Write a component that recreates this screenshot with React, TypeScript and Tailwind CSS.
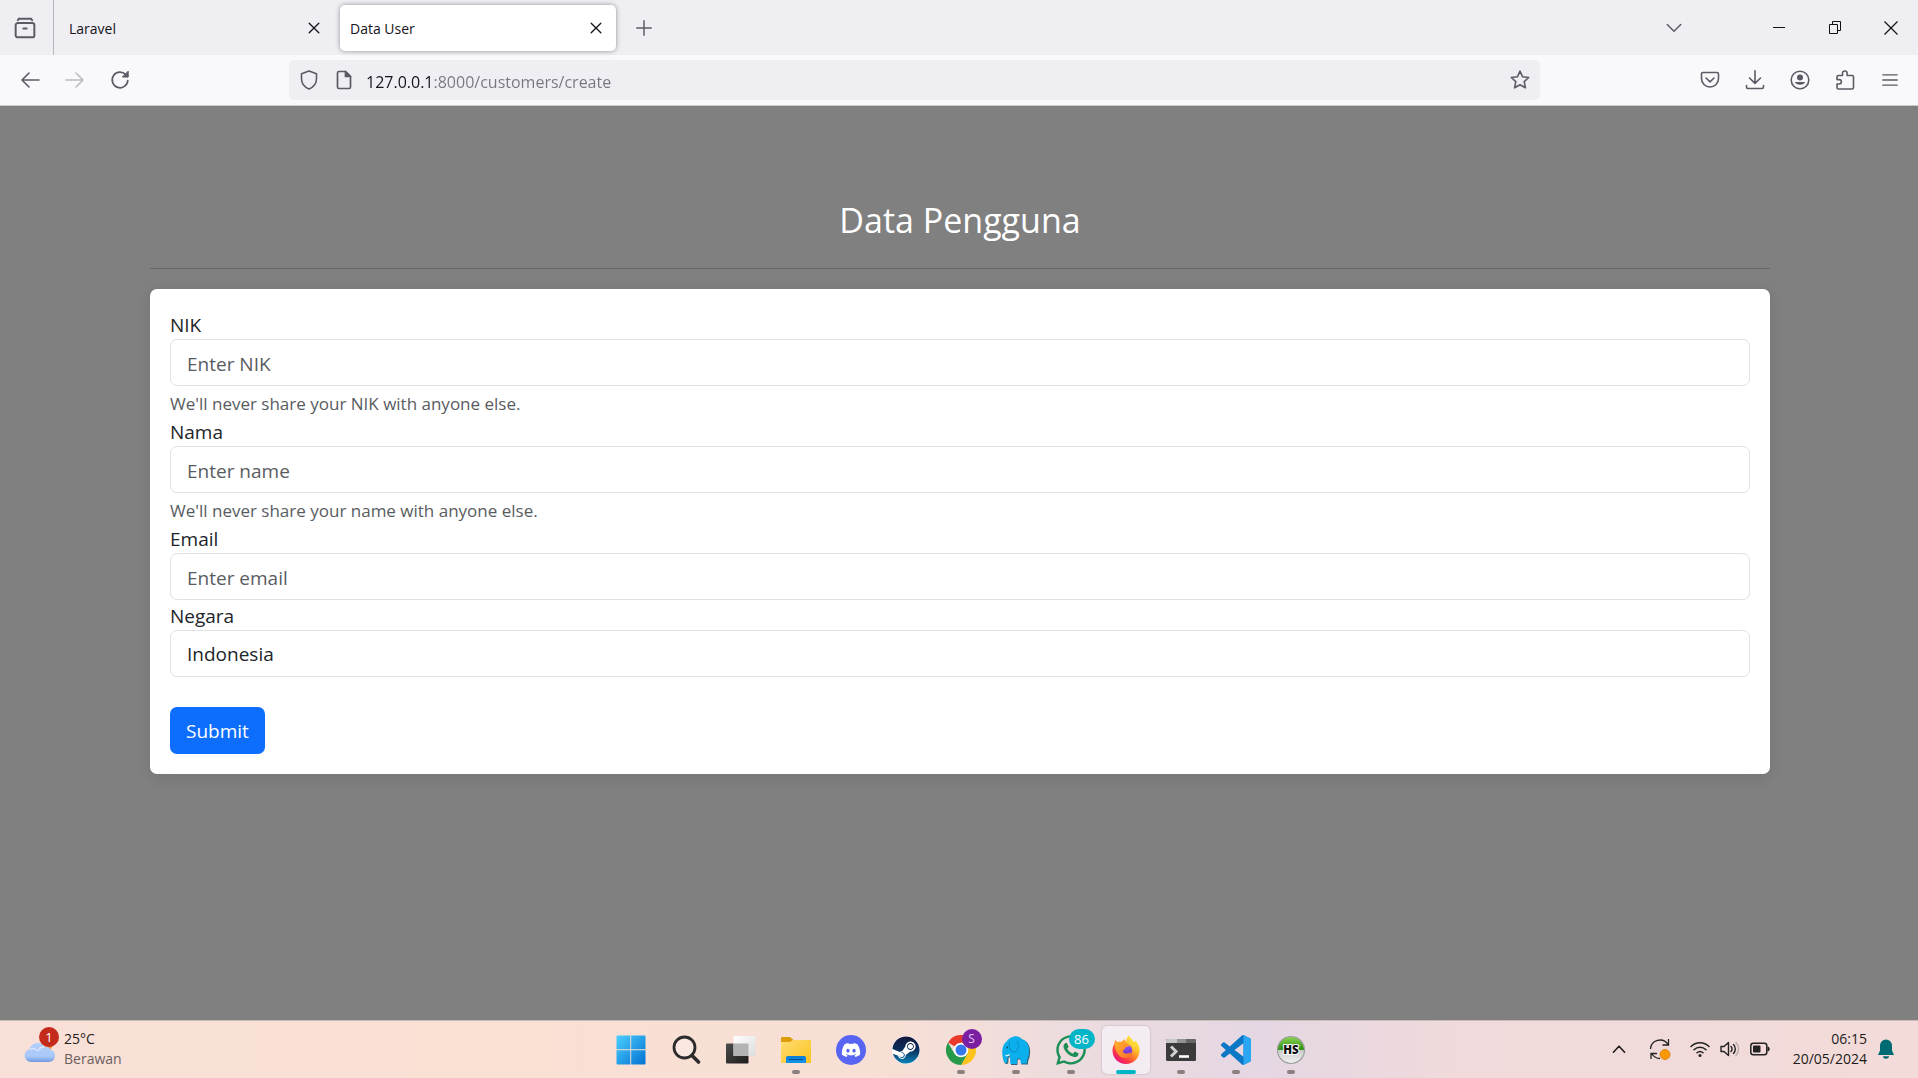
import React from "react";
import { FaDiscord, FaSteam, FaWhatsapp } from "react-icons/fa";

type Kids = { children: React.ReactNode };

function Line({ size = 20, w = 1.6, children }: Kids & { size?: number; w?: number }) {
  return (
    <svg width={size} height={size} viewBox="0 0 20 20" fill="none" stroke="currentColor" strokeWidth={w} strokeLinecap="round" strokeLinejoin="round">
      {children}
    </svg>
  );
}

function ToolButton({ label, dim, children }: Kids & { label: string; dim?: boolean }) {
  return (
    <button type="button" aria-label={label} className={dim ? "flex h-10 w-[45px] items-center justify-center text-[#bcbcc1]" : "flex h-10 w-[45px] items-center justify-center text-[#5b5b66]"}>
      {children}
    </button>
  );
}

function CloseX() {
  return (
    <Line size={12} w={2.2}>
      <path d="M2 2l16 16M18 2L2 18" />
    </Line>
  );
}

function TabStrip() {
  return (
    <div className="flex h-[55px] items-center bg-[#efeef3] text-[14px] text-[#15141a]">
      <button type="button" aria-label="Recent browsing" className="flex h-full w-[54px] items-center justify-center border-r border-[#b8b8be] pr-1 text-[#5b5b66]">
        <Line size={22} w={1.8}>
          <path d="M4.5 1.5h11l1 1.5M3.5 3l1-1.500" />
          <rect x="1.500" y="5.500" width="17" height="13" rx="2" />
          <path d="M8.500 10.500h3" />
        </Line>
      </button>
      <div className="flex w-[286px] items-center justify-between pl-[15px] pr-5">
        <span className="pt-[2px]">Laravel</span>
        <button type="button" aria-label="Close Laravel tab"><CloseX /></button>
      </div>
      <div className="flex h-[46px] w-[276px] items-center justify-between rounded-[5px] bg-white pl-[10px] pr-[14px] shadow-[0_0_5px_rgba(0,0,0,0.4)]">
        <span className="pt-[2px]">Data User</span>
        <button type="button" aria-label="Close Data User tab"><CloseX /></button>
      </div>
      <button type="button" aria-label="New tab" className="flex w-[55px] justify-center text-[#5b5b66]">
        <Line size={18} w={1.6}><path d="M10 2v16M2 10h16" /></Line>
      </button>
      <div className="flex-1" />
      <button type="button" aria-label="List all tabs" className="mr-[54px] flex h-full w-[45px] items-center justify-center text-[#5b5b66]">
        <Line size={18}><path d="M2.500 6l7.500 7.500L17.500 6" /></Line>
      </button>
      <button type="button" aria-label="Minimize" className="flex h-full w-[57px] items-center justify-center">
        <svg width="12" height="12" viewBox="0 0 12 12"><rect y="5" width="12" height="1" fill="#111" /></svg>
      </button>
      <button type="button" aria-label="Restore" className="flex h-full w-[57px] items-center justify-center">
        <svg width="13" height="13" viewBox="0 0 13 13" fill="none" stroke="#111"><path d="M.5 3.500h8v9h-8zM3.500 3.500v-3h8v9h-3" /></svg>
      </button>
      <button type="button" aria-label="Close window" className="flex h-full w-[54px] items-center justify-center">
        <svg width="14" height="14" viewBox="0 0 14 14" stroke="#111" strokeWidth="1.200"><path d="M.5.5l13 13M13.500.5l-13 13" /></svg>
      </button>
    </div>
  );
}

function NavBar() {
  return (
    <div className="flex h-[51px] items-center border-b border-[#c9c9ce] bg-[#f9f9fb] pl-[7px] pr-[6px]">
      <ToolButton label="Back"><Line size={20}><path d="M19 10H2M9 3L2 10l7 7" /></Line></ToolButton>
      <ToolButton label="Forward" dim><Line size={20}><path d="M1 10h17M11 3l7 7-7 7" /></Line></ToolButton>
      <ToolButton label="Reload">
        <Line size={20} w={1.7}>
          <path d="M17.800 10.500a7.800 7.800 0 1 1-2.300-6.100l2 2" />
          <path d="M18.200 1.500v5.500h-5.500z" fill="currentColor" strokeWidth="1" />
        </Line>
      </ToolButton>
      <div className="w-[147px]" />
      <div className="flex h-10 flex-1 items-center rounded-[5px] bg-[#efeef3] px-[10px] text-[#5b5b66]">
        <Line size={20}><path d="M10 1l7.500 2.800v5C17.500 13.500 14.500 17.200 10 19 5.500 17.200 2.500 13.500 2.500 8.800v-5z" /></Line>
        <span className="ml-[15px] flex">
          <Line size={20} w={1.7}>
            <path d="M5 1.500h6.500l5 5V17a1.500 1.500 0 0 1-1.500 1.500H5A1.500 1.500 0 0 1 3.500 17V3A1.500 1.500 0 0 1 5 1.500z" />
            <path d="M11.500 1.500v5h5z" fill="currentColor" />
          </Line>
        </span>
        <input
          aria-label="Address"
          defaultValue="127.0.0.1:8000/customers/create"
          className="ml-3 mt-[3px] flex-1 bg-[linear-gradient(90deg,#15141a_66px,#77777f_66px)] bg-clip-text text-[16px] leading-6 text-transparent outline-none"
        />
        <button type="button" aria-label="Bookmark this page">
          <Line size={20}><path d="M10 1.200l2.600 5.600 6.100.7-4.500 4.200 1.200 6.100-5.400-3-5.400 3 1.200-6.100L1.300 7.500l6.100-.7z" /></Line>
        </button>
      </div>
      <div className="w-[147px]" />
      <ToolButton label="Save to Pocket"><Line size={20}><path d="M3 2.500h14A1.500 1.500 0 0 1 18.500 4v4.500a8.500 8.500 0 0 1-17 0V4A1.500 1.500 0 0 1 3 2.500zM6 8l4 3.800L14 8" /></Line></ToolButton>
      <ToolButton label="Downloads"><Line size={20}><path d="M10 .8v12.400M4.500 8l5.500 5.400L15.500 8M1.500 15.500V17A1.500 1.500 0 0 0 3 18.500h14a1.500 1.500 0 0 0 1.500-1.500v-1.500" /></Line></ToolButton>
      <ToolButton label="Account">
        <Line size={20}>
          <circle cx="10" cy="10" r="8.800" />
          <circle cx="10" cy="7.500" r="3" fill="currentColor" stroke="none" />
          <path d="M4.800 12h10.400a5.600 4.200 0 0 1-10.400 0z" fill="currentColor" stroke="none" />
        </Line>
      </ToolButton>
      <ToolButton label="Extensions"><Line size={20}><path d="M7.500 5.500V3.300a2.300 2.300 0 0 1 4.600 0v2.200h5.100A1.300 1.300 0 0 1 18.500 7v10.500a1.500 1.500 0 0 1-1.500 1.500H3.500A1.500 1.500 0 0 1 2 17.500V14h2.200a2.200 2.200 0 0 0 0-4.400H2V7a1.500 1.500 0 0 1 1.500-1.500z" /></Line></ToolButton>
      <ToolButton label="Menu"><Line size={18}><path d="M2 4.300h16M2 10h16M2 15.700h16" /></Line></ToolButton>
    </div>
  );
}

const control = "block h-[47px] w-full appearance-none rounded-[7px] border border-[#dee2e6] bg-white px-4 pt-[2px] text-[19px] text-[#212529] outline-none placeholder:text-[#595c5f]";

function Field({ id, label, hint, children }: Kids & { id: string; label: string; hint?: string }) {
  return (
    <div>
      <label htmlFor={id} className="block pt-[2px] text-[19px] leading-[28px] text-[#212529]">{label}</label>
      {children}
      {hint && <small className="block pt-[6px] text-[17px] leading-6 text-[#595c5f]">{hint}</small>}
    </div>
  );
}

function Page() {
  return (
    <main className="flex-1 bg-[#808080] pl-[34px] pr-8">
      <div className="mx-auto max-w-[1620px] pt-[93px]">
        <h1 className="text-center text-[34px] leading-[42px] text-white">Data Pengguna</h1>
        <hr className="mb-5 mt-[27px] border-[#666768]" />
        <form className="rounded-[7px] bg-white p-5 shadow-[0_3px_16px_rgba(0,0,0,0.1)]" onSubmit={(e) => e.preventDefault()}>
          <Field id="nik" label="NIK" hint="We'll never share your NIK with anyone else.">
            <input id="nik" type="text" placeholder="Enter NIK" className={control} />
          </Field>
          <Field id="nama" label="Nama" hint="We'll never share your name with anyone else.">
            <input id="nama" type="text" placeholder="Enter name" className={control} />
          </Field>
          <Field id="email" label="Email">
            <input id="email" type="email" placeholder="Enter email" className={control} />
          </Field>
          <Field id="negara" label="Negara">
            <select id="negara" className={control}><option>Indonesia</option></select>
          </Field>
          <button type="submit" className="mt-[30px] h-[47px] rounded-[7px] bg-[#0d6efd] px-4 pt-[2px] text-[19px] text-white">Submit</button>
        </form>
      </div>
    </main>
  );
}

function TaskItem({ label, running, active, children }: Kids & { label: string; running?: boolean; active?: boolean }) {
  return (
    <button type="button" aria-label={label} className="flex h-[58px] w-[55px] items-center justify-center">
      <span className={active ? "relative flex h-12 w-12 items-center justify-center rounded-[5px] bg-[#f3edf3] shadow-[0_0_2px_rgba(0,0,0,0.25)]" : "relative flex h-12 w-12 items-center justify-center"}>
        {children}
        {running && <span className={active ? "absolute bottom-0 h-1 w-5 rounded-full bg-[#04b5c8]" : "absolute bottom-0 h-1 w-2 rounded-full bg-[#8b7f80]"} />}
      </span>
    </button>
  );
}

function WindowsLogo() {
  return (
    <svg width="30" height="30" viewBox="0 0 30 30">
      <defs>
        <linearGradient id="win" gradientUnits="userSpaceOnUse" x1="0" y1="0" x2="30" y2="30"><stop stopColor="#4dd0ff" /><stop offset="1" stopColor="#0070d0" /></linearGradient>
      </defs>
      <path fill="url(#win)" d="M1.500.5h12.800v13.800H.5V1.500a1 1 0 0 1 1-1zM15.200.5h13.300a1 1 0 0 1 1 1v12.800H15.200zM.5 15.200h13.800v14.300H1.500a1 1 0 0 1-1-1zM15.200 15.200h14.300v13.300a1 1 0 0 1-1 1H15.200z" />
    </svg>
  );
}

function SearchLogo() {
  return (
    <svg width="30" height="30" viewBox="0 0 30 30" fill="none" stroke="#2d2c2c">
      <circle cx="13.500" cy="12.500" r="10.500" strokeWidth="2.800" fill="#fff" fillOpacity=".3" />
      <path d="M21 20.500l6.500 6.500" strokeWidth="3.600" strokeLinecap="round" />
    </svg>
  );
}

function TaskViewLogo() {
  return (
    <svg width="30" height="30" viewBox="0 0 30 30">
      <defs>
        <linearGradient id="tvd" x2="1" y2="1"><stop stopColor="#4b4b49" /><stop offset="1" stopColor="#1d1d1d" /></linearGradient>
        <linearGradient id="tvl" x2="1" y2="1"><stop stopColor="#fff" /><stop offset="1" stopColor="#dcdcdc" /></linearGradient>
      </defs>
      <rect x="0" y="8.500" width="22.500" height="20" rx="1" fill="url(#tvd)" />
      <rect x="7.500" y="1" width="22" height="20" rx="1" fill="url(#tvl)" />
      <path d="M7.500 8.500h15V21h-15z" fill="#b3b3b3" />
    </svg>
  );
}

function FolderLogo() {
  return (
    <svg width="30" height="30" viewBox="0 0 30 30">
      <defs>
        <linearGradient id="fold" x2="1" y2="1"><stop stopColor="#ffdd74" /><stop offset="1" stopColor="#fcc21c" /></linearGradient>
        <linearGradient id="fblue" x2="0" y2="1"><stop stopColor="#0b7bd6" /><stop offset="1" stopColor="#1296ea" /></linearGradient>
      </defs>
      <path d="M0 3a1 1 0 0 1 1-1h8l3.500 3H29a1 1 0 0 1 1 1v4H0z" fill="#dd9c0c" />
      <path d="M0 7h9l3-2h17a1 1 0 0 1 1 1v21a1 1 0 0 1-1 1H1a1 1 0 0 1-1-1z" fill="url(#fold)" />
      <path d="M5 28v-5a2 2 0 0 1 2-2h16a2 2 0 0 1 2 2v5z" fill="url(#fblue)" />
      <path d="M8.500 24.500h13" stroke="#07508f" strokeWidth="1.200" strokeLinecap="round" />
    </svg>
  );
}

function ChromeLogo() {
  return (
    <svg width="30" height="30" viewBox="0 0 30 30">
      <path d="M15 15L2 7.500A15 15 0 0 1 28 7.500z" fill="#e8392b" />
      <path d="M15 15V7.500h13A15 15 0 0 1 15 30l6.500-11.200z" fill="#fcc31e" />
      <path d="M15 15l6.500 3.800L15 30A15 15 0 0 1 2 7.500l6.500 11.200z" fill="#27994a" />
      <circle cx="15" cy="15" r="7.300" fill="#fff" />
      <circle cx="15" cy="15" r="5.500" fill="#3478ef" />
    </svg>
  );
}

function ElephantLogo() {
  return (
    <svg width="30" height="30" viewBox="0 0 30 30">
      <path d="M2 24C.5 17 1 10 5.500 6.500 8 3 12.500.5 16 1.500c2.500.2 3.500 1.500 4.500 2.500C26 5.500 29 11 28.500 17c-.2 4-.8 6-1.800 8l-.5 4h-6.500l-.5-5h-3l-.4 5.500H9.500L8.800 21c-1.300.8-2 1.500-2 3.500 0 3 .2 4-1.800 4-1.600 0-2.300-1.500-3-4.500z" fill="#35627a" transform="translate(.6 .5)" />
      <path d="M2 23.500C.5 17 1 10 5.500 6.500 8 3 12.500.5 16 1.500c2.500.2 3.500 1.500 4.500 2.500 5.500 1.500 8 7 7.500 12.500-.2 4-.8 6-1.800 8l-.5 4h-6l-.5-5h-3l-.4 5.500H9.500L8.800 20.500c-1.300.8-2.500 1.500-2.500 4 0 2.500.2 3.500-1.500 3.500-1.400 0-2.100-1.500-2.800-4.500z" fill="#0bafec" />
      <path d="M8.500 7c-1 5 1 10 4.500 10 4 0 6-6 3-11" fill="none" stroke="#078cc4" strokeWidth="1" />
      <path d="M4.500 20.500c1.500.4 3 .2 4-1" fill="none" stroke="#e5f8ff" strokeWidth="1.300" />
      <circle cx="6.200" cy="12.500" r=".9" fill="#0b5274" />
    </svg>
  );
}

function FirefoxLogo() {
  return (
    <svg width="30" height="30" viewBox="0 0 30 30">
      <defs>
        <linearGradient id="ffa" x1=".85" y1=".1" x2=".2" y2=".95"><stop stopColor="#fff04a" /><stop offset=".3" stopColor="#ffc02c" /><stop offset=".55" stopColor="#ff7a2a" /><stop offset=".8" stopColor="#fb2f4e" /><stop offset="1" stopColor="#e31587" /></linearGradient>
        <linearGradient id="ffb" x2="0" y2="1"><stop stopColor="#9059ff" /><stop offset="1" stopColor="#6b2bbd" /></linearGradient>
        <linearGradient id="ffc" x2="1" y2="1"><stop stopColor="#ffb52b" /><stop offset="1" stopColor="#ff6f2c" /></linearGradient>
      </defs>
      <path d="M17.500.5c2 1.500 3.200 3 4 5 .8.400 1.500 1 2.200 1.800l.3-2c3.500 3 4.800 7 4.600 10.700C28.200 23.600 22.300 29 15 29 7.500 29 1.500 23.500 1.500 15.500c0-3 1-5.500 2.200-7.200L4 5l2.500 2.200c1-.4 2.500-.5 3.500-.2L14 4c0 1.500 0 2.500 1 3 .2-2.500 1-4.800 2.500-6.500z" fill="url(#ffa)" />
      <circle cx="15.200" cy="15.500" r="6" fill="url(#ffb)" />
      <path d="M3.500 7.500c2 0 4.500-.8 6.500-.3L14 4.500c-.2 2 .4 3 2.500 4.500l2 2c-1 .8-2.500.5-3.500 1.200-1 .6-1 2-2.200 2.800-1.300.8-1.300 2 .2 2.900 2.800 1.600 5 0 7-.4 2 1.500-1.500 5.500-6 5.500-6 0-10-6-10.500-15.500z" fill="url(#ffc)" />
      <path d="M18 8.500c3 1 5 4 4.500 7.500 1.500-2 1.500-5 .5-7L19 6z" fill="#ffd735" />
    </svg>
  );
}

function TerminalLogo() {
  return (
    <svg width="30" height="30" viewBox="0 0 30 30">
      <rect y="4" width="30" height="22" rx="1.500" fill="#3b3b3b" />
      <path d="M1.500 4H11v4H0V5.500A1.500 1.500 0 0 1 1.500 4z" fill="#c7c7c7" />
      <path d="M11 4h9v4h-9z" fill="#939393" />
      <path d="M20 4h8.500A1.500 1.500 0 0 1 30 5.500V8H20z" fill="#686868" />
      <path d="M5 11.500l5 5-5 5" fill="none" stroke="#d0d0d0" strokeWidth="3" />
      <path d="M13 21.500h10" stroke="#fff" strokeWidth="2.600" />
    </svg>
  );
}

function VsCodeLogo() {
  return (
    <svg width="30" height="30" viewBox="0 0 24 24">
      <path fill="#0a78c4" d="M23.150 2.587L18.210.21a1.494 1.494 0 0 0-1.705.29l-9.460 8.630-4.120-3.128a.999.999 0 0 0-1.276.057L.327 7.261A1 1 0 0 0 .326 8.740L3.899 12 .326 15.260a1 1 0 0 0 .001 1.479L1.650 17.940a.999.999 0 0 0 1.276.057l4.120-3.128 9.460 8.630a1.492 1.492 0 0 0 1.704.290l4.942-2.377A1.500 1.500 0 0 0 24 20.060V3.939a1.500 1.500 0 0 0-.850-1.352zm-5.146 14.861L10.826 12l7.178-5.448v10.896z" />
      <path fill="#2aa6f2" d="M18.210.21l4.940 2.377A1.500 1.500 0 0 1 24 3.940v16.120a1.500 1.500 0 0 1-.850 1.350l-4.940 2.380c-.6.300-1.200.100-1.705-.290.8.6 1.500.1 1.500-.900V1.400c0-1-.7-1.500-1.500-.9.500-.5 1.100-.6 1.705-.29z" />
    </svg>
  );
}

function HeidiLogo() {
  return (
    <svg width="30" height="30" viewBox="0 0 30 30">
      <defs>
        <linearGradient id="hs" x2="0" y2="1"><stop stopColor="#8fd65a" /><stop offset=".48" stopColor="#2c8f12" /><stop offset=".5" stopColor="#c9cbc9" /><stop offset="1" stopColor="#f2f2f2" /></linearGradient>
      </defs>
      <circle cx="15" cy="15" r="13.500" fill="url(#hs)" stroke="#9b9f9b" strokeWidth="1.200" />
      <text x="15" y="19" textAnchor="middle" fontFamily="Open Sans" fontWeight="800" fontSize="11.500" fill="#111" stroke="#fff" strokeWidth="2" paintOrder="stroke">HS</text>
    </svg>
  );
}

function Taskbar() {
  return (
    <footer className="grid h-[58px] grid-cols-[1fr_auto_1fr] items-center border-t border-[#c9bcb8] bg-[linear-gradient(90deg,#f8e0d8_0%,#fae0d3_25%,#f7dfd6_47%,#eadbe0_58%,#e5d7e3_66%,#f0dadb_76%,#f2dbd8_100%)] pl-[3px] leading-5 text-[#1f1b1b]">
      <div className="flex items-center pb-[2px] pl-5 text-[14px]">
        <span className="relative flex h-11 w-[41px]">
          <svg width="32" height="40" viewBox="0 0 32 40">
            <defs><linearGradient id="cloud" x2="0" y2="1"><stop stopColor="#b5cffb" /><stop offset=".7" stopColor="#a9c8f8" /><stop offset="1" stopColor="#6f9be2" /></linearGradient></defs>
            <circle cx="24" cy="17" r="6" fill="#f08a24" />
            <path d="M8 35a6.500 6.500 0 0 1-1.500-12.800A8.500 8.500 0 0 1 22 20c2.500-1 5 .5 6 3a6.200 6.200 0 0 1-2 12z" fill="url(#cloud)" />
            <path d="M7 22.500c3-1.500 6-.5 7.500 1.500M15 24c1.500-3 4-4.500 7-4" fill="none" stroke="#dfeafe" strokeWidth="1.200" />
          </svg>
          <span className="absolute left-4 top-0 flex h-5 w-5 items-center justify-center rounded-full bg-[#c42b1c] text-[13px] text-white">1</span>
        </span>
        <span className="flex flex-col">
          <span>25°C</span>
          <span className="text-[#6a605e]">Berawan</span>
        </span>
      </div>
      <nav aria-label="Taskbar apps" className="flex">
        <TaskItem label="Start"><WindowsLogo /></TaskItem>
        <TaskItem label="Search"><SearchLogo /></TaskItem>
        <TaskItem label="Task view"><TaskViewLogo /></TaskItem>
        <TaskItem label="File Explorer" running><FolderLogo /></TaskItem>
        <TaskItem label="Discord"><span className="flex h-[30px] w-[30px] items-center justify-center rounded-full bg-[#5865f2] text-white"><FaDiscord size={20} /></span></TaskItem>
        <TaskItem label="Steam">
          <span className="flex h-[28px] w-[28px] rounded-full bg-white">
            <svg width="0" height="0"><defs><linearGradient id="steam" x2="0" y2="1"><stop stopColor="#14163a" /><stop offset=".5" stopColor="#0b2f5c" /><stop offset="1" stopColor="#0a84b8" /></linearGradient></defs></svg>
            <FaSteam size={28} fill="url(#steam)" />
          </span>
        </TaskItem>
        <TaskItem label="Chrome" running>
          <ChromeLogo />
          <span className="absolute left-[25px] top-[3px] flex h-5 w-5 items-center justify-center rounded-full bg-[#7b1fa2] text-[12px] text-[#e6c8f0]">S</span>
        </TaskItem>
        <TaskItem label="Database" running><ElephantLogo /></TaskItem>
        <TaskItem label="WhatsApp" running>
          <FaWhatsapp size={34} color="#1c8f57" className="shrink-0" />
          <span className="absolute left-[22px] top-[3px] flex h-5 w-[26px] items-center justify-center rounded-full bg-[#04b5c8] text-[13px] text-white">86</span>
        </TaskItem>
        <TaskItem label="Firefox" running active><FirefoxLogo /></TaskItem>
        <TaskItem label="Terminal" running><TerminalLogo /></TaskItem>
        <TaskItem label="Visual Studio Code" running><VsCodeLogo /></TaskItem>
        <TaskItem label="HeidiSQL" running><HeidiLogo /></TaskItem>
      </nav>
      <div className="flex items-center justify-end pb-[2px] pr-6 text-[14px]">
        <button type="button" aria-label="Show hidden icons" className="mr-[22px]"><Line size={16} w={2}><path d="M3 14l7-7.500 7 7.500" /></Line></button>
        <button type="button" aria-label="Updates" className="mr-[19px]">
          <svg width="22" height="22" viewBox="0 0 22 22" fill="none" stroke="#222" strokeWidth="1.300">
            <path d="M1.500 11A9.500 9.500 0 0 1 19 6.500M19.500 1v6h-6M2 21v-5.500h6M3 16a9.500 9.500 0 0 0 8 4.500" />
            <circle cx="16" cy="16.500" r="5" fill="#fb9804" stroke="#d58a1e" strokeWidth="1" />
          </svg>
        </button>
        <span className="mr-[10px]">
          <svg width="20" height="18" viewBox="0 0 20 18" fill="none" stroke="#222" strokeWidth="1.500" strokeLinecap="round">
            <path d="M1 6.500a12.500 12.500 0 0 1 18 0M4 9.800a8.500 8.500 0 0 1 12 0M7 12.800a4.500 4.500 0 0 1 6 0" />
            <circle cx="10" cy="15.500" r="1.500" fill="#222" stroke="none" />
          </svg>
        </span>
        <span className="mr-[10px]">
          <svg width="20" height="18" viewBox="0 0 20 18" fill="none" stroke="#222" strokeWidth="1.400" strokeLinecap="round" strokeLinejoin="round">
            <path d="M1 6.500h3L8.500 2.500v13L4 11.500H1zM11 6.500a3.500 3.500 0 0 1 0 5M13.500 4.500a6.500 6.500 0 0 1 0 9" />
            <path d="M16 2.500a9.500 9.500 0 0 1 0 13" stroke="#b9adac" />
          </svg>
        </span>
        <span className="mr-[23px]">
          <svg width="20" height="14" viewBox="0 0 20 14">
            <rect x=".8" y="1.300" width="16" height="11.400" rx="2.500" fill="none" stroke="#222" strokeWidth="1.500" />
            <rect x="3" y="3.500" width="7.500" height="7" rx="1" fill="#222" />
            <path d="M17.500 4.500c3 .5 3 4.500 0 5z" fill="#222" />
          </svg>
        </span>
        <span className="flex flex-col text-right"><span>06:15</span><span>20/05/2024</span></span>
        <button type="button" aria-label="Notifications" className="ml-[11px]">
          <svg width="16" height="20" viewBox="0 0 16 20" fill="#006a72">
            <path d="M8 .5a6 6 0 0 1 6 6v5l2 4.500H0l2-4.500v-5a6 6 0 0 1 6-6zM5 17.300h6a3 2.400 0 0 1-6 0z" />
          </svg>
        </button>
      </div>
    </footer>
  );
}

export default function App() {
  return (
    <div className="flex min-h-screen flex-col font-['Open_Sans','Noto_Sans',sans-serif]">
      <header>
        <TabStrip />
        <NavBar />
      </header>
      <Page />
      <Taskbar />
    </div>
  );
}
